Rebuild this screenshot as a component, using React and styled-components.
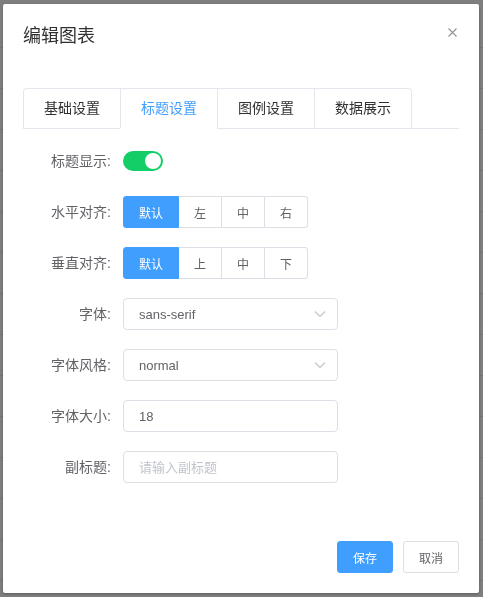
import React, { useState } from "react";
import styled, { createGlobalStyle } from "styled-components";

const GlobalStyle = createGlobalStyle`
  html, body {
    margin: 0;
    padding: 0;
    width: 483px;
    height: 597px;
    overflow: hidden;
    background: #fff;
    font-family: "Liberation Sans", "Noto Sans CJK SC", sans-serif;
  }
`;

const tabs = ["基础设置", "标题设置", "图例设置", "数据展示"];

const App = () => {
  const [active, setActive] = useState(1);
  const [show, setShow] = useState(true);
  const [hAlign, setHAlign] = useState(0);
  const [vAlign, setVAlign] = useState(0);

  return (
    <>
      <GlobalStyle />
      <Page>
        {Array.from({ length: 15 }).map((_, i) => (
          <PageRow key={i} />
        ))}
      </Page>
      <Overlay>
        <Dialog>
          <DialogHeader>
            <DialogTitle>编辑图表</DialogTitle>
            <CloseButton aria-label="Close">
              <svg width="9" height="9" viewBox="0 0 9 9">
                <path d="M0.5 0.5L8.5 8.5M8.5 0.5L0.5 8.5" stroke="#909399" strokeWidth="1.1" fill="none" />
              </svg>
            </CloseButton>
          </DialogHeader>

          <DialogBody>
            <TabHeader>
              <TabNav>
                {tabs.map((t, i) => (
                  <TabItem key={t} $active={i === active} $first={i === 0} onClick={() => setActive(i)}>
                    {t}
                  </TabItem>
                ))}
              </TabNav>
            </TabHeader>

            <TabContent>
              <FormItem>
                <Label>标题显示:</Label>
                <Switch $on={show} onClick={() => setShow(!show)} />
              </FormItem>

              <FormItem>
                <Label>水平对齐:</Label>
                <RadioGroup>
                  {["默认", "左", "中", "右"].map((t, i) => (
                    <RadioButton key={t} $checked={hAlign === i} onClick={() => setHAlign(i)}>
                      {t}
                    </RadioButton>
                  ))}
                </RadioGroup>
              </FormItem>

              <FormItem>
                <Label>垂直对齐:</Label>
                <RadioGroup>
                  {["默认", "上", "中", "下"].map((t, i) => (
                    <RadioButton key={t} $checked={vAlign === i} onClick={() => setVAlign(i)}>
                      {t}
                    </RadioButton>
                  ))}
                </RadioGroup>
              </FormItem>

              <FormItem>
                <Label>字体:</Label>
                <Select>
                  <span>sans-serif</span>
                  <Chevron />
                </Select>
              </FormItem>

              <FormItem>
                <Label>字体风格:</Label>
                <Select>
                  <span>normal</span>
                  <Chevron />
                </Select>
              </FormItem>

              <FormItem>
                <Label>字体大小:</Label>
                <Input defaultValue="18" />
              </FormItem>

              <FormItem>
                <Label>副标题:</Label>
                <Input placeholder="请输入副标题" />
              </FormItem>
            </TabContent>
          </DialogBody>

          <DialogFooter>
            <Button $primary>保存</Button>
            <Button>取消</Button>
          </DialogFooter>
        </Dialog>
      </Overlay>
    </>
  );
};

const Chevron = () => (
  <svg width="14" height="14" viewBox="0 0 14 14">
    <path d="M2 4.5L7 9.5L12 4.5" stroke="#c0c4cc" strokeWidth="1.1" fill="none" />
  </svg>
);

export default App;

/* ---------------- Styled Components ---------------- */
const Page = styled.div`
  padding-top: 7px;
`;

const PageRow = styled.div`
  height: 40px;
  border-bottom: 1px solid #e6e6e6;
`;

const Overlay = styled.div`
  position: fixed;
  inset: 0;
  background: rgba(0, 0, 0, 0.5);
  display: flex;
  align-items: flex-start;
  justify-content: flex-start;
  padding: 4px 0 0 3px;
`;

const Dialog = styled.div`
  width: 476px;
  background: #fff;
  border-radius: 2px;
  box-shadow: 0 1px 3px rgba(0, 0, 0, 0.3);
  display: flex;
  flex-direction: column;
`;

const DialogHeader = styled.div`
  padding: 20px 20px 10px;
  display: flex;
  align-items: center;
  justify-content: space-between;
`;

const DialogTitle = styled.span`
  font-size: 18px;
  line-height: 24px;
  color: #303133;
`;

const CloseButton = styled.button`
  all: unset;
  width: 12px;
  height: 12px;
  display: flex;
  align-items: center;
  justify-content: center;
  margin-right: 1px;
  margin-top: -7px;
  cursor: pointer;
`;

const DialogBody = styled.div`
  padding: 30px 20px 30px;
`;

const TabHeader = styled.div`
  border-bottom: 1px solid #e4e7ed;
  display: flex;
`;

const TabNav = styled.div`
  display: flex;
  border: 1px solid #e4e7ed;
  border-bottom: none;
  border-radius: 4px 4px 0 0;
`;

const TabItem = styled.div`
  height: 40px;
  box-sizing: border-box;
  line-height: 39px;
  padding: 0 20px;
  font-size: 14px;
  color: ${({ $active }) => ($active ? "#409eff" : "#303133")};
  border-left: ${({ $first }) => ($first ? "none" : "1px solid #e4e7ed")};
  margin-bottom: -1px;
  border-bottom: 1px solid ${({ $active }) => ($active ? "#fff" : "transparent")};
  cursor: pointer;
`;

const TabContent = styled.div`
  padding: 16px 0 18px;
  display: flex;
  flex-direction: column;
  gap: 19px;
`;

const FormItem = styled.div`
  display: flex;
  align-items: center;
  height: 32px;
`;

const Label = styled.label`
  width: 100px;
  box-sizing: border-box;
  padding-right: 12px;
  text-align: right;
  font-size: 14px;
  line-height: 30px;
  color: #606266;
`;

const Switch = styled.span`
  position: relative;
  width: 40px;
  height: 20px;
  border-radius: 10px;
  background: ${({ $on }) => ($on ? "#13ce66" : "#dcdfe6")};
  cursor: pointer;

  &::after {
    content: "";
    position: absolute;
    top: 2px;
    left: ${({ $on }) => ($on ? "22px" : "2px")};
    width: 16px;
    height: 16px;
    border-radius: 50%;
    background: #fff;
  }
`;

const RadioGroup = styled.div`
  display: flex;
`;

const RadioButton = styled.span`
  height: 32px;
  box-sizing: border-box;
  padding: 0 15px;
  display: flex;
  align-items: center;
  font-size: 12px;
  border: 1px solid ${({ $checked }) => ($checked ? "#409eff" : "#dcdfe6")};
  border-left: ${({ $checked }) => ($checked ? "1px solid #409eff" : "none")};
  background: ${({ $checked }) => ($checked ? "#409eff" : "#fff")};
  color: ${({ $checked }) => ($checked ? "#fff" : "#606266")};
  cursor: pointer;

  &:first-child {
    border-left: 1px solid ${({ $checked }) => ($checked ? "#409eff" : "#dcdfe6")};
    border-radius: 3px 0 0 3px;
  }

  &:last-child {
    border-radius: 0 3px 3px 0;
  }
`;

const Select = styled.div`
  width: 215px;
  height: 32px;
  box-sizing: border-box;
  border: 1px solid #dcdfe6;
  border-radius: 4px;
  padding: 0 10px 0 15px;
  display: flex;
  align-items: center;
  justify-content: space-between;
  font-size: 13px;
  color: #606266;
  cursor: pointer;
`;

const Input = styled.input`
  width: 215px;
  height: 32px;
  box-sizing: border-box;
  border: 1px solid #dcdfe6;
  border-radius: 4px;
  padding: 0 15px;
  font-family: inherit;
  font-size: 13px;
  color: #606266;
  outline: none;

  &::placeholder {
    color: #c0c4cc;
  }
`;

const DialogFooter = styled.div`
  padding: 10px 20px 20px;
  display: flex;
  justify-content: flex-end;
  gap: 10px;
`;

const Button = styled.button`
  width: 56px;
  height: 32px;
  box-sizing: border-box;
  border-radius: 3px;
  font-family: inherit;
  font-size: 12px;
  border: 1px solid ${({ $primary }) => ($primary ? "#409eff" : "#dcdfe6")};
  background: ${({ $primary }) => ($primary ? "#409eff" : "#fff")};
  color: ${({ $primary }) => ($primary ? "#fff" : "#606266")};
  cursor: pointer;
`;
